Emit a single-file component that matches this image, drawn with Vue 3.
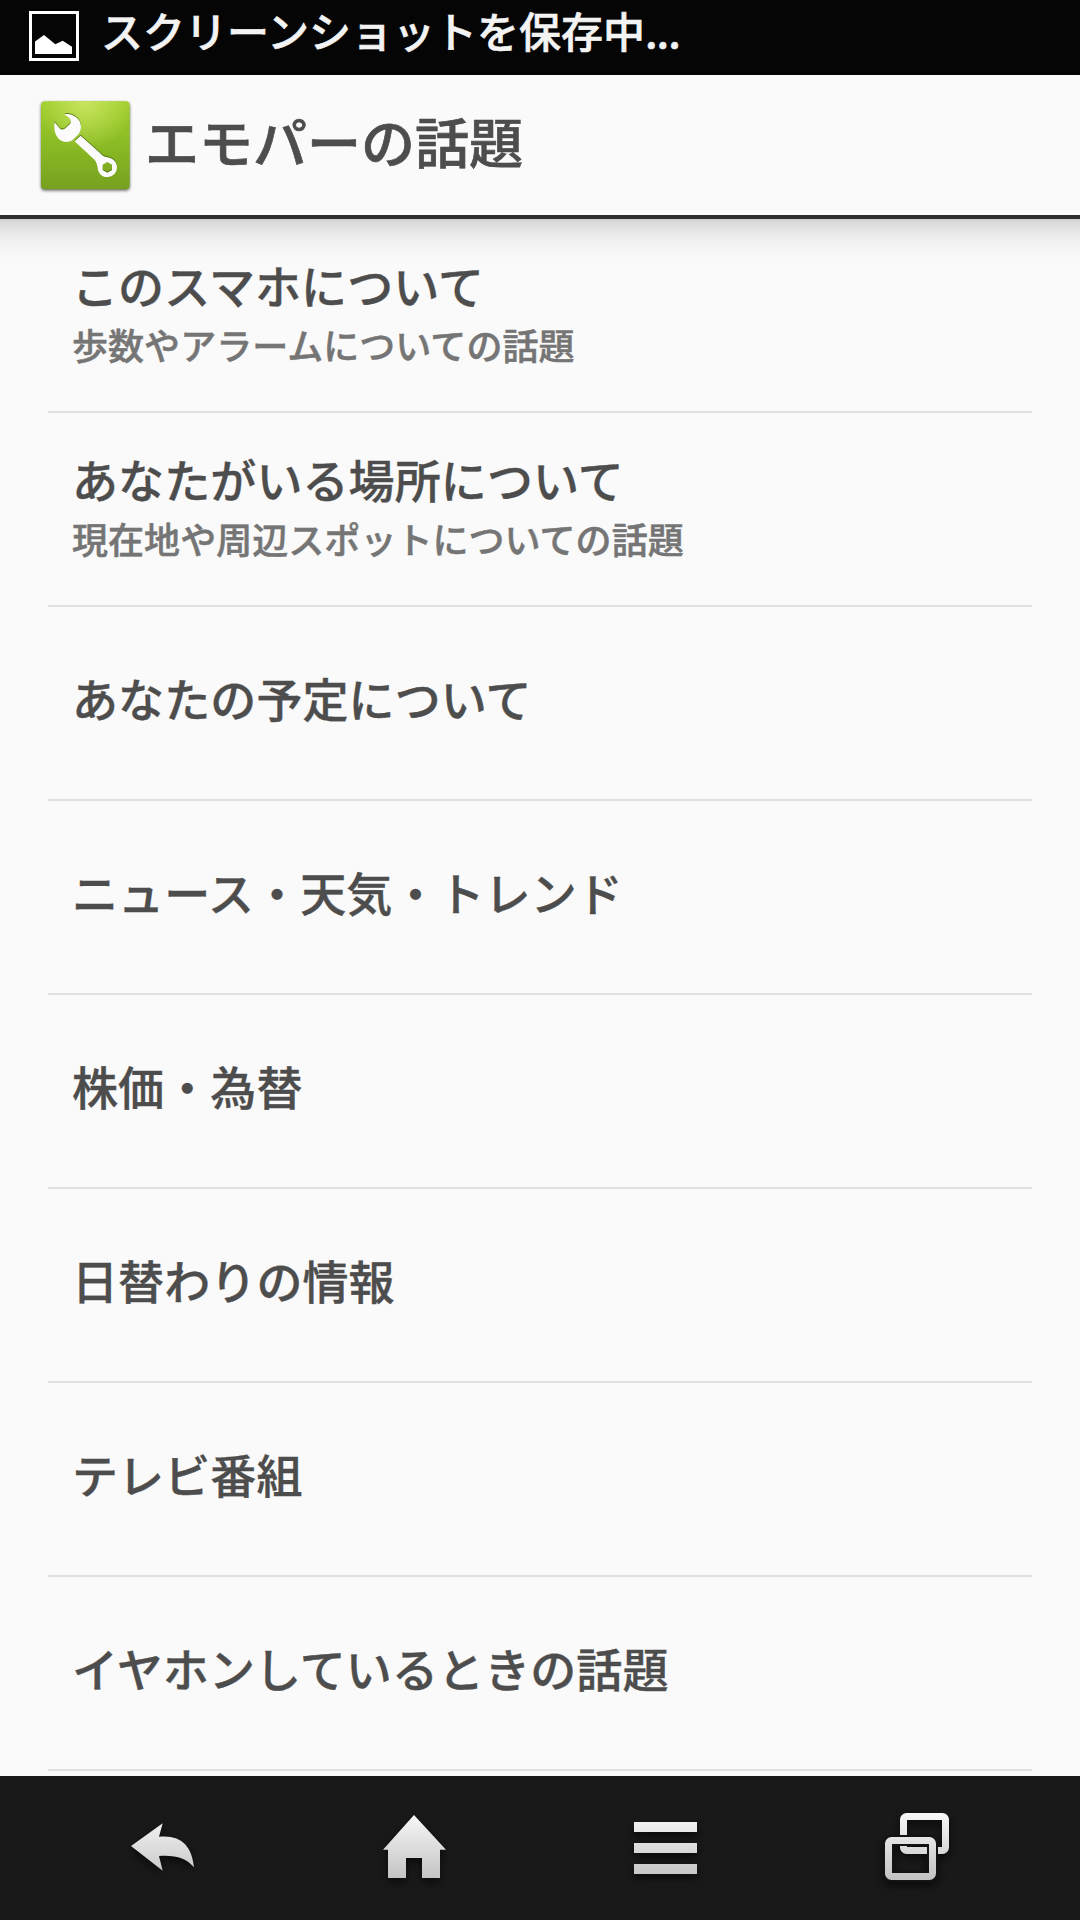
<template>
  <div class="screen">
    <!-- Status bar -->
    <div class="status">
      <svg class="status-icon" viewBox="0 0 50 50">
        <rect x="1.5" y="1.5" width="47" height="47" fill="none" stroke="#fff" stroke-width="3" />
        <path d="M6 30.5L15 24l11.3 9.3 7.4-3.6L43 35.7V43H6z" fill="#fff" />
      </svg>
      <span class="status-text">スクリーンショットを保存中<span class="dots">...</span></span>
    </div>

    <!-- Title bar -->
    <header class="header">
      <svg class="app-icon" viewBox="0 0 330 330">
        <defs>
          <linearGradient id="green" x1="0" y1="0" x2="0" y2="1">
            <stop offset="0" stop-color="#a0ce2c" />
            <stop offset="0.5" stop-color="#8aba24" />
            <stop offset="1" stop-color="#76a01f" />
          </linearGradient>
          <radialGradient id="shine" cx="0.5" cy="0" r="0.55">
            <stop offset="0" stop-color="#cfe968" stop-opacity="0.85" />
            <stop offset="1" stop-color="#cfe968" stop-opacity="0" />
          </radialGradient>
        </defs>
        <rect class="tile" x="33" y="34" width="266" height="264" rx="12" fill="url(#green)" />
        <rect x="33" y="34" width="266" height="264" rx="12" fill="url(#shine)" />
        <g class="wrench">
          <path d="M103 72C121 70 141 78 149 94C155 108 154 121 146 132L127 151C113 159 95 157 84 144C74 132 70 113 74 97L91 117Q99 121 106 115L121 101Q125 93 118 84Z" />
          <path fill-rule="evenodd" d="M152 137L210 189Q217 199 232 202C250 204 261 217 261 232C261 249 248 261 232 261C215 261 204 249 203 233Q201 219 195 211L134 154ZM232 216L218 224V240L232 248L246 240V224Z" />
        </g>
      </svg>
      <h1 class="title">エモパーの話題</h1>
    </header>

    <!-- Topic list -->
    <ul class="list">
      <li v-for="topic in topics" :key="topic.name" class="row">
        <span class="name">{{ topic.name }}</span>
        <span v-if="topic.summary" class="summary">{{ topic.summary }}</span>
      </li>
    </ul>

    <!-- Navigation keys -->
    <nav class="nav">
      <svg class="key" viewBox="0 0 72 72">
        <defs>
          <linearGradient id="metal" gradientUnits="userSpaceOnUse" x1="0" y1="2" x2="0" y2="68">
            <stop offset="0" stop-color="#f8f8f8" />
            <stop offset="1" stop-color="#c2c2c2" />
          </linearGradient>
        </defs>
        <path d="M5 34L36.7 11.3L33 24.7C55 22.5 66 34 68 55.3C60 46 50 43 33 44L36.7 58.7Z" fill="url(#metal)" />
      </svg>
      <svg class="key" viewBox="0 0 72 72">
        <path d="M36 3L68 37.7H62V66H44V46H28V66H10V37.7H5Z" fill="url(#metal)" />
      </svg>
      <svg class="key" viewBox="0 0 72 72">
        <path d="M4 10h63v10H4zM4 31h63v10H4zM4 52h63v10H4z" fill="url(#metal)" />
      </svg>
      <svg class="key" viewBox="0 0 72 72">
        <rect x="21.5" y="4.5" width="42" height="34" rx="3" fill="none" stroke="url(#metal)" stroke-width="7" />
        <rect x="6.5" y="28.5" width="44" height="36" rx="3" fill="none" stroke="#131313" stroke-width="11" />
        <rect x="6.5" y="28.5" width="44" height="36" rx="3" fill="none" stroke="url(#metal)" stroke-width="7" />
      </svg>
    </nav>
  </div>
</template>

<script setup>
// summary is optional, rows without it show only the name
const topics = [
  { name: "このスマホについて", summary: "歩数やアラームについての話題" },
  { name: "あなたがいる場所について", summary: "現在地や周辺スポットについての話題" },
  { name: "あなたの予定について" },
  { name: "ニュース・天気・トレンド" },
  { name: "株価・為替" },
  { name: "日替わりの情報" },
  { name: "テレビ番組" },
  { name: "イヤホンしているときの話題" },
];
</script>

<style>
body {
  margin: 0;
  background: #fafafa;
}
</style>

<style scoped>
.screen {
  display: flex;
  flex-direction: column;
  width: 1080px;
  height: 1920px;
  overflow: hidden;
  background: #fafafa;
  font-family: "Noto Sans CJK JP", sans-serif;
  font-weight: 500;
  white-space: nowrap;
}

.status {
  display: flex;
  flex: none;
  height: 75px;
  padding-left: 29px;
  background: #050505;
}

.status-icon {
  width: 50px;
  height: 50px;
  margin-top: 11px;
}

.status-text {
  margin-left: 22px;
  font-size: 42px;
  line-height: 59px;
  color: #f3f3f3;
  -webkit-text-stroke: 0.6px #f3f3f3;
}

.dots {
  letter-spacing: -0.8px;
}

.header {
  display: flex;
  flex: none;
  box-sizing: border-box;
  height: 144px;
  padding-left: 30px;
  border-bottom: 4px solid #2e2e2e;
}

.app-icon {
  width: 110px;
  height: 110px;
  margin-top: 15px;
}

.tile {
  filter: drop-shadow(0 4px 5px rgba(0, 0, 0, 0.6));
}

.wrench {
  fill: #fcfcfc;
  filter: drop-shadow(0 -3px 2px rgba(50, 80, 0, 0.65));
}

.title {
  margin: 0 0 0 5px;
  font-size: 54px;
  font-weight: 500;
  line-height: 131px;
  color: #4d4d4d;
  -webkit-text-stroke: 0.7px #4d4d4d;
}

.list {
  flex: 1;
  min-height: 0;
  margin: 0;
  padding: 0 48px;
  overflow: hidden;
  list-style: none;
  background: linear-gradient(#cdcdcd 0, #d9d9d9 3px, #e4e4e4 10px, #f0f0f0 22px, #fafafa 40px);
}

.row {
  display: flex;
  flex-direction: column;
  justify-content: center;
  box-sizing: border-box;
  height: 194px;
  padding: 0 24px 12px;
  border-bottom: 2px solid #e0e0e0;
}

.name {
  font-size: 46px;
  line-height: 70px;
  letter-spacing: 0.1px;
  color: #4d4d4d;
  -webkit-text-stroke: 0.4px #4d4d4d;
}

.summary {
  font-size: 36px;
  line-height: 50px;
  letter-spacing: 0.05px;
  color: #757575;
  -webkit-text-stroke: 0.5px #757575;
}

.nav {
  display: grid;
  grid-template-columns: repeat(4, 1fr);
  place-items: center;
  flex: none;
  box-sizing: border-box;
  height: 144px;
  padding: 0 36px;
  background: #191919;
}

.key {
  width: 72px;
  height: 72px;
  overflow: visible;
  filter: drop-shadow(0 4px 4px rgba(0, 0, 0, 0.6));
}
</style>
